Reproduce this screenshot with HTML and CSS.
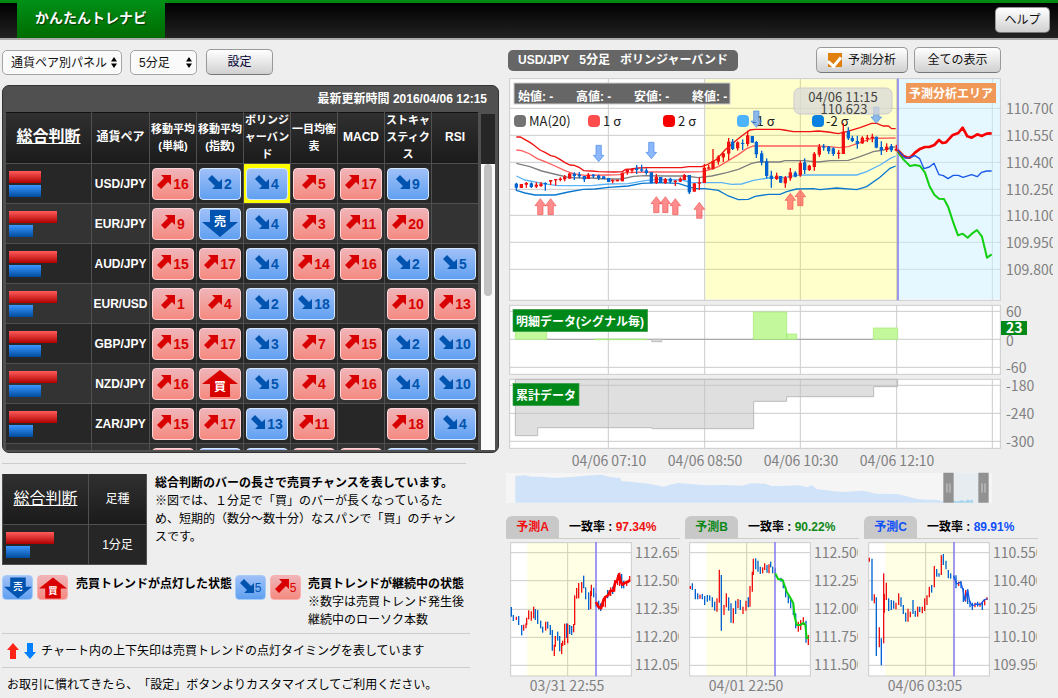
FILE: index.html
```html
<!DOCTYPE html>
<html lang="ja">
<head>
<meta charset="utf-8">
<title>かんたんトレナビ</title>
<link rel="stylesheet" href="styles.css">
</head>
<body>
<header class="top-bar">
  <h1 class="brand">かんたんトレナビ</h1>
  <button class="btn btn-help" type="button">ヘルプ</button>
</header>

<main class="layout">
  <section class="left">
    <div class="controls">
      <label class="select-box select-wide">
        <select aria-label="パネル"><option>通貨ペア別パネル</option></select>
        <svg class="select-arrows" viewBox="0 0 6 11" aria-hidden="true"><path d="M0 4.5L3 0L6 4.5ZM0 6.500L3 11L6 6.500Z"/></svg>
      </label>
      <label class="select-box select-narrow">
        <select aria-label="足種"><option>5分足</option></select>
        <svg class="select-arrows" viewBox="0 0 6 11" aria-hidden="true"><path d="M0 4.5L3 0L6 4.5ZM0 6.500L3 11L6 6.500Z"/></svg>
      </label>
      <button class="btn btn-settings" type="button">設定</button>
    </div>

    <div class="panel">
      <p class="updated">最新更新時間 2016/04/06 12:15</p>
      <div class="panel-body">
        <div class="table-clip">
          <table class="signals">
            <colgroup><col class="col-total"><col class="col-pair"><col span="7"></colgroup>
            <thead>
              <tr>
                <th class="th-total"><a href="#total">総合判断</a></th>
                <th class="th-pair">通貨ペア</th>
                <th>移動平均<br>(単純)</th>
                <th>移動平均<br>(指数)</th>
                <th>ボリンジ<br>ャーバン<br>ド</th>
                <th>一目均衡<br>表</th>
                <th class="th-pair">MACD</th>
                <th>ストキャ<br>スティク<br>ス</th>
                <th class="th-pair">RSI</th>
              </tr>
            </thead>
            <tbody id="signal-rows"></tbody>
          </table>
        </div>
        <div class="scroll">
          <div class="scroll-head"></div>
          <div class="scroll-track"><div class="scroll-thumb"></div></div>
        </div>
      </div>
    </div>

    <div class="guide" id="total">
      <table class="sample">
        <tr><th class="sample-total"><a href="#total">総合判断</a></th><th>足種</th></tr>
        <tr><td class="sample-bars"><div class="bar bar-buy bar-l"></div><div class="bar bar-sell bar-s"></div></td><td>1分足</td></tr>
      </table>
      <p class="guide-text"><strong>総合判断のバーの長さで売買チャンスを表しています。</strong><br>※図では、１分足で「買」のバーが長くなっているた<br>め、短期的（数分～数十分）なスパンで「買」のチャン<br>スです。</p>
    </div>

    <div class="legend">
      <span class="signal signal-small down"><svg class="big" viewBox="0 0 36 27"><path d="M8 0H28V12H36L18 27L0 12H8Z"/><text x="18" y="16">売</text></svg></span>
      <span class="signal signal-small up"><svg class="big" viewBox="0 0 36 27"><path d="M18 0L36 14H28V27H8V14H0Z"/><text x="18" y="21">買</text></svg></span>
      <strong class="legend-lit">売買トレンドが点灯した状態</strong>
      <span class="signal signal-small down"><svg class="arrow" viewBox="0 0 14 14"><path d="M4 14H14V4L11 7L4 0L0 4L7 11Z"/></svg>5</span>
      <span class="signal signal-small up"><svg class="arrow" viewBox="0 0 14 14"><path d="M4 0H14V10L11 7L4 14L0 10L7 3Z"/></svg>5</span>
      <p class="legend-cont"><strong>売買トレンドが継続中の状態</strong><br>※数字は売買トレンド発生後<br>継続中のローソク本数</p>
    </div>

    <p class="note">
      <svg class="note-arrows" viewBox="0 0 30 16" aria-hidden="true"><path class="fill-red" d="M6 0L12 7H9V16H3V7H0Z"/><path class="fill-blue" d="M20 0H26V9H29L23 16L17 9H20Z"/></svg>
      チャート内の上下矢印は売買トレンドの点灯タイミングを表しています
    </p>
    <p class="note note-last">お取引に慣れてきたら、「設定」ボタンよりカスタマイズしてご利用ください。</p>
  </section>

  <section class="right">
    <div class="chart-bar">
      <h2 class="chart-title"><span>USD/JPY</span><span>5分足</span><span>ボリンジャーバンド</span></h2>
      <label class="btn btn-check"><input type="checkbox" checked>予測分析</label>
      <button class="btn btn-all" type="button">全ての表示</button>
    </div>

    <svg class="chart" viewBox="505 76 553 227" role="img" aria-label="USD/JPY 5分足チャート">
      <defs>
        <clipPath id="axis-clip"><rect x="1002" y="76" width="51" height="227"/></clipPath>
      </defs>
      <g transform="translate(505 40) scale(.33333)">
        <rect class="plot" x="14" y="116" width="1472" height="665"/>
        <path class="grid" d="M14 205H1486M14 286H1486M14 367H1486M14 448H1486M14 526H1486M14 607H1486M14 688H1486M310 116V781M599 116V781M886 116V781M1175 116V781M1462 116V781"/>
        <rect class="zone-yellow" x="601" y="118" width="576" height="660"/>
        <rect class="zone-blue" x="1181" y="118" width="303" height="660"/>
      </g>
      <g class="legend-dots">
        <rect x="514" y="115" width="12" height="12" rx="4" fill="#737373"/>
        <rect x="588" y="115" width="12" height="12" rx="4" fill="#ff4d4d"/>
        <rect x="663" y="115" width="12" height="12" rx="4" fill="#f90000"/>
        <rect x="737" y="115" width="12" height="12" rx="4" fill="#4db3ff"/>
        <rect x="812" y="115" width="12" height="12" rx="4" fill="#0a80e0"/>
      </g>
      <g class="legend-names">
        <text x="529" y="126">MA(20)</text><text x="603" y="126">1 σ</text><text x="678" y="126">2 σ</text><text x="752" y="126">-1 σ</text><text x="826" y="126">-2 σ</text>
      </g>
      <g transform="translate(505 40) scale(.33333)">
        <g class="bands">
          <path stroke="#0a78d0" d="M34 451L60 459L90 465H150L190 456L235 448L270 447L310 442L370 438L410 430L460 428L520 430L550 440L570 446H600L640 451L670 468L700 479L730 478L750 469L790 463L825 463L845 455L875 447L925 446L945 449L995 444L1055 449L1085 440L1125 412L1155 385L1172 378"/>
          <path stroke="#5cb3f5" d="M34 408L60 420L100 428L135 434L160 437H260L310 432L370 431L420 422L460 418L530 420L560 428H650L680 433L710 432L745 421L790 414L840 412L875 406L905 405H1055L1085 395L1125 375L1155 356L1172 348"/>
          <path stroke="#808080" d="M34 370L75 380L110 393L160 405L190 412L225 414H260L300 417H350L385 409L420 407L480 408H540L580 413L620 408L665 398L700 388L740 370L760 366H825L840 362H895L940 366L975 362L1030 361L1065 350L1105 335L1135 330L1172 320"/>
          <path stroke="#ff5c5c" d="M34 330L50 332L75 342L95 355L120 365L150 378L180 392L205 401L240 406L310 405L345 404L360 398L430 396H540L590 395L610 390L640 380L670 362L700 344L725 326L745 318H940L970 320L1003 323L1030 320L1065 308L1100 295L1172 294"/>
          <path stroke="#f01010" d="M34 291H46L60 299L76 308L90 318L105 330L120 337L137 347L150 350L165 358L180 368L195 375L208 376L222 382L236 392L260 393L280 395L330 396L352 395L362 388L380 387L400 384L430 383H530L550 380H590L605 375L635 358L660 330L685 308L710 288L735 270L750 268H825L837 270L865 275H915L940 273L970 276L1000 281L1025 275L1065 263L1100 250H1115L1135 258H1150L1160 266H1172"/>
        </g>
        <g id="main-candles"></g>
        <rect class="now-line" x="1176" y="116" width="6" height="665"/>
        <path class="f-green" d="M1178 335L1195 358L1215 378L1230 375L1245 378L1260 398L1273 437L1288 464L1302 476L1317 477L1330 502L1345 548L1359 586L1373 581L1388 593L1402 580L1416 570L1431 590L1446 653L1460 643"/>
        <path class="f-red" d="M1178 330L1195 348L1205 352L1215 353L1230 338L1243 328L1260 321H1273L1288 315L1302 300L1312 309L1323 307L1342 286L1360 279L1373 263L1387 289L1400 293L1417 283L1430 288L1445 281L1460 280"/>
        <path class="f-blue" d="M1178 330L1200 354L1215 353L1230 347L1244 356L1257 386L1273 381L1287 370L1302 404L1315 407L1329 416L1345 406L1360 406L1374 412L1400 404L1417 410L1430 397L1445 393H1460"/>
        <g id="main-arrows"></g>
      </g>
      <rect class="ohlc-box" x="514" y="83" width="216" height="21"/>
      <g class="ohlc"><text x="518" y="101">始値: -</text><text x="576" y="101">高値: -</text><text x="634" y="101">安値: -</text><text x="692" y="101">終値: -</text></g>
      <rect class="tip" x="794" y="88" width="98" height="26" rx="6"/>
      <g class="tip-text"><text x="843" y="102">04/06 11:15</text><text x="844" y="114">110.623</text></g>
      <rect class="area-box" x="906" y="83" width="90" height="20"/>
      <text class="area-text" x="951" y="98">予測分析エリア</text>
      <g class="axis" clip-path="url(#axis-clip)">
        <text x="1006" y="114">110.700</text><text x="1006" y="141">110.550</text><text x="1006" y="168">110.400</text><text x="1006" y="195">110.250</text><text x="1006" y="221">110.100</text><text x="1006" y="248">109.950</text><text x="1006" y="275">109.800</text>
      </g>
    </svg>

    <svg class="chart" viewBox="505 303 553 73" role="img" aria-label="明細データ">
      <g transform="translate(505 300) scale(.33333)">
        <rect class="plot" x="14" y="16" width="1472" height="207"/>
        <path class="grid" d="M14 34H1486M14 118H1486M14 202H1486M310 16V223M599 16V223M886 16V223M1175 16V223M1462 16V223"/>
        <path stroke="#a0a0a0" stroke-width="3" d="M125 118H1105"/>
        <path class="gain" d="M31 88H125V118H31ZM745 36H845V118H745ZM845 102H875V118H845ZM1105 84H1178V118H1105ZM268 117H426V119H268Z"/>
        <rect class="loss" x="441" y="118" width="29" height="7"/>
        <rect class="tag" x="24" y="28" width="404" height="67"/>
      </g>
      <g class="axis"><text x="1006" y="317">60</text><text x="1006" y="346">0</text><text x="1006" y="373">-60</text></g>
      <rect class="tag-flat" x="1001" y="321" width="26" height="14"/>
      <text class="tag-text" x="516" y="326">明細データ(シグナル毎)</text>
      <text class="tag-num" x="1006" y="333">23</text>
    </svg>

    <svg class="chart" viewBox="505 376 553 95" role="img" aria-label="累計データ">
      <g transform="translate(505 300) scale(.33333)">
        <rect class="plot" x="14" y="238" width="1472" height="207"/>
        <path class="grid" d="M14 256H1486M14 340H1486M14 424H1486M310 238V445M599 238V445M886 238V445M1175 238V445M1462 238V445"/>
        <path class="loss" d="M31 238V407H98V383H441V386H746V304H845V290H1106V260H1178V238Z"/>
        <rect class="tag" x="24" y="250" width="198" height="67"/>
      </g>
      <text class="tag-text" x="516" y="400">累計データ</text>
      <g class="axis"><text x="1006" y="391">-180</text><text x="1006" y="419">-240</text><text x="1006" y="447">-300</text></g>
      <g class="axis axis-mid"><text x="609" y="466">04/06 07:10</text><text x="705" y="466">04/06 08:50</text><text x="801" y="466">04/06 10:30</text><text x="897" y="466">04/06 12:10</text></g>
    </svg>

    <svg class="chart" viewBox="505 471 553 37" role="img" aria-label="表示範囲">
      <rect x="506" y="473" width="486" height="30" fill="#f5f5f5"/>
      <rect x="953" y="473" width="25" height="30" fill="#e6ecef"/>
      <g transform="translate(505 300) scale(.33333)">
        <path fill="#d0e3f8" d="M31 608V528L60 526L80 530H110L150 534L200 531L240 527L290 524L310 530L345 534L350 543L390 547L430 551L455 556L475 560L500 553L520 549L600 556L660 555L710 557L740 550L780 551L800 558L825 558L885 556L905 562L922 556L935 567L975 572L1015 576L1075 572L1115 581L1175 582L1205 589L1235 597L1265 599L1295 599L1315 604V608Z"/>
        <path fill="#a8d4ee" d="M1346 608V602L1360 604L1372 600L1380 605L1388 598L1395 602L1404 598V608Z"/>
        <path fill="#919191" d="M1315 518H1346V608H1315ZM1420 518H1451V608H1420Z"/>
        <path stroke="#d0d0d0" stroke-width="3" d="M1326 550V578M1335 550V578M1431 550V578M1440 550V578"/>
      </g>
    </svg>

    <div class="minis">
      <article class="mini mini-a">
        <div class="mini-head"><button class="tab" type="button">予測A</button><p>一致率 : <b>97.34%</b></p></div>
        <svg class="chart" viewBox="0 0 174 157" id="mini-a" role="img" aria-label="予測A"></svg>
      </article>
      <article class="mini mini-b">
        <div class="mini-head"><button class="tab" type="button">予測B</button><p>一致率 : <b>90.22%</b></p></div>
        <svg class="chart" viewBox="0 0 174 157" id="mini-b" role="img" aria-label="予測B"></svg>
      </article>
      <article class="mini mini-c">
        <div class="mini-head"><button class="tab" type="button">予測C</button><p>一致率 : <b>89.91%</b></p></div>
        <svg class="chart" viewBox="0 0 174 157" id="mini-c" role="img" aria-label="予測C"></svg>
      </article>
    </div>
  </section>
</main>
<script src="app.js"></script>
</body>
</html>
```

FILE: styles.css
```css
* { box-sizing: border-box; }

body {
  margin: 0;
  background: #eee;
  color: #000;
  font: 12px/18px "Liberation Sans", "Noto Sans CJK JP", sans-serif;
  text-spacing-trim: space-all;
}

p, h1, h2 { margin: 0; }
button, select, input { font: inherit; }
svg { display: block; }

/* Header */
.top-bar {
  display: flex;
  justify-content: space-between;
  height: 40px;
  padding: 0 8px 0 17px;
  border-bottom: 2px solid #aaa;
  background: linear-gradient(#008a14 3px, #000 3px, #222);
}
.brand {
  padding: 0 18px;
  background: linear-gradient(#009018, #006c00);
  color: #fff;
  font-size: 14px;
  line-height: 37px;
  text-shadow: 1px 1px 1px #003800;
}

.btn {
  height: 26px;
  padding: 0;
  border: 1px solid #999;
  border-bottom-color: #777;
  border-radius: 5px;
  background: linear-gradient(#fff, #d0d0d0);
  color: #111;
  font-size: 12px;
  line-height: 24px;
  text-align: center;
}
.btn-help { width: 55px; margin-top: 7px; }
.btn-settings { width: 67px; margin-left: 1px; color: #003; }

.layout {
  display: grid;
  grid-template-columns: 505px minmax(0, 1fr);
}

/* Left column */
.left { padding: 9px 6px 0 2px; }

.controls { display: flex; gap: 8px; }
.select-box { position: relative; display: block; }
.select-box select {
  width: 100%;
  height: 25px;
  margin-top: 1px;
  padding: 0 8px;
  border: 1px solid #a4a4a4;
  border-radius: 5px;
  background: #fafafa;
  color: #111;
  appearance: none;
}
.select-wide { width: 120px; }
.select-narrow { width: 67px; }
.select-arrows { position: absolute; top: 8px; right: 5px; width: 6px; height: 11px; }

.panel {
  margin-top: 10px;
  padding: 0 3px 2px;
  border: 1px solid #333;
  border-radius: 7px;
  background: #505050;
}
.updated {
  padding: 1px 8px 0 0;
  color: #fff;
  font-weight: bold;
  line-height: 25px;
  text-align: right;
}
.panel-body { display: flex; gap: 2px; height: 338px; }
.table-clip { flex: 1; overflow: hidden; }

.signals { width: 100%; border-spacing: 0; table-layout: fixed; color: #fff; font-weight: bold; }
.signals col { width: 47px; }
.signals .col-total { width: 86px; }
.signals .col-pair { width: 58px; }
.signals th {
  height: 52px;
  padding: 0;
  border-right: 1px solid #505050;
  border-bottom: 1px solid #505050;
  background: linear-gradient(#111 1px, #303030 1px, #1b1b1b);
  font-size: 11px;
  line-height: 17px;
  white-space: nowrap;
}
.signals .th-pair { font-size: 12px; }
.th-total a, .sample-total a { color: #fff; font-size: 16px; }
.signals td {
  height: 40px;
  padding: 0;
  border-right: 1px solid #505050;
  border-bottom: 1px solid #505050;
  background: #272727;
  text-align: center;
}
.signals tr:nth-child(even) td { background: #333; }
.signals td.picked { background: #ff0; }
.signals td.total { padding-left: 3px; text-align: left; }

.bar { height: 12px; }
.bar + .bar { margin-top: 2px; }
.bar-buy { background: linear-gradient(#ff5c5c, #b00000); }
.bar-sell { background: linear-gradient(#3c96ff, #004c9c); }
.bar-l { width: 48px; }
.bar-m { width: 32px; }
.bar-s { width: 24px; }

.signal {
  display: flex;
  align-items: center;
  justify-content: center;
  gap: 2px;
  width: 42px;
  height: 32px;
  margin: 0 auto;
  padding: 0;
  border: 1px solid;
  border-radius: 4px;
  font-size: 14px;
  font-weight: bold;
}
.up { border-color: #ffd4d8; background: linear-gradient(#f0b4b8, #f48a80); color: #d80000; }
.down { border-color: #d4e8ff; background: linear-gradient(#a0c0f8, #60a0f0); color: #0054b0; }
.arrow { flex: none; width: 14px; height: 14px; margin-bottom: 3px; }
.signal path { fill: currentColor; }
.big { width: 36px; height: 27px; }
.big text { fill: #fff; font-size: 12px; font-weight: bold; text-anchor: middle; }

.scroll { display: flex; flex-direction: column; width: 14px; }
.scroll-head { height: 52px; border-top: 2px solid #505050; background: #262626; }
.scroll-track { flex: 1; padding: 0 3px; background: #fafafa; }
.scroll-thumb { width: 8px; height: 132px; border-radius: 4px; background: #c1c1c1; }

/* Guide below the table */
.guide {
  display: flex;
  gap: 8px;
  width: 464px;
  margin-top: 10px;
  padding-top: 10px;
  border-top: 1px solid #ccc;
}
.sample { width: 145px; border-spacing: 0; border: 1px solid #505050; border-width: 0 0 1px 1px; color: #fff; }
.sample th, .sample td {
  padding: 0;
  border-right: 1px solid #505050;
  background: #262626;
  font-weight: normal;
  text-align: center;
}
.sample th { height: 51px; border-bottom: 1px solid #505050; background: linear-gradient(#303030, #1b1b1b); }
.sample td { height: 39px; }
.sample .sample-total { width: 86px; }
.sample .sample-bars { padding-left: 3px; }

.legend { display: flex; width: 468px; padding: 10px 0 4px; border-bottom: 1px solid #ccc; }
.signal-small { width: 31px; height: 25px; margin: 0 4px 0 0; gap: 1px; font-size: 12px; font-weight: normal; }
.signal-small.up { border-color: #f8b0b0; }
.signal-small.down { border-color: #a8ccf8; }
.signal-small .big { width: 28px; height: 22px; }
.legend-lit { margin: 0 3px 0 4px; white-space: nowrap; }
.legend-cont { margin-left: 3px; white-space: nowrap; }

.note {
  display: flex;
  align-items: center;
  gap: 4px;
  width: 468px;
  height: 34px;
  padding-left: 5px;
  border-bottom: 1px solid #ccc;
  white-space: nowrap;
}
.note-arrows { width: 30px; height: 16px; }
.fill-red { fill: #ff2418; }
.fill-blue { fill: #0080ff; }
.note-last { border: 0; height: 28px; padding-top: 6px; }

/* Right column */
.right { padding-top: 7px; }
.chart-bar { display: flex; gap: 6px; align-items: center; height: 29px; padding: 0 57px 3px 3px; }
.chart-title {
  display: flex;
  gap: 10px;
  margin-right: auto;
  padding: 0 10px;
  border-radius: 5px;
  background: #666;
  color: #fff;
  font-size: 12px;
  line-height: 21px;
}
.btn-check { display: flex; align-items: center; justify-content: center; gap: 6px; width: 92px; }
.btn-check input {
  appearance: none;
  width: 14px;
  height: 14px;
  margin: 0;
  background: #e08010;
}
.btn-check input::after {
  content: "";
  display: block;
  width: 6px;
  height: 10px;
  margin: 1px auto 0;
  border: solid #fff;
  border-width: 0 3px 3px 0;
  transform: rotate(40deg);
}
.btn-all { width: 87px; }

.chart { width: 100%; height: auto; }
.chart text { font-family: "Noto Sans CJK JP", sans-serif; }
.plot { fill: #fff; stroke: #ccc; stroke-width: 3; }
.grid { fill: none; stroke: #ccc; stroke-width: 3; }
.zone-yellow { fill: #ff0; opacity: .2; }
.zone-pale { fill: #ff0; opacity: .1; }
.zone-blue { fill: #ccefff; opacity: .5; }
.now-line { fill: #8078f0; opacity: .75; }
.bands path { fill: none; stroke-width: 4; }
.rise { stroke: #f01010; }
.fall { stroke: #0064d0; }
.wick { stroke-width: 4; }
.body { stroke-width: 10; }
.f-red, .f-green, .f-blue { fill: none; stroke-linejoin: round; }
.f-red { stroke: #f80000; stroke-width: 8; }
.f-green { stroke: #10d010; stroke-width: 6; }
.f-blue { stroke: #1858e8; stroke-width: 4; }
.mark-up { fill: #ff4040; fill-opacity: .6; stroke: #f05858; stroke-width: 2; }
.mark-down { fill: #4088f8; fill-opacity: .6; stroke: #4888e8; stroke-width: 2; }
.gain { fill: #c4f89c; stroke: #a0e870; stroke-width: 2; }
.loss { fill: #c0c0c0; fill-opacity: .5; stroke: #bbb; stroke-width: 3; }
.tag { fill: #008818; stroke: #40a050; stroke-width: 2; }
.tag-flat { fill: #008818; }
.axis text { fill: #808080; font-size: 14px; }
.axis-mid text { text-anchor: middle; }
.legend-names text { fill: #222; font-size: 13px; }
.ohlc-box { fill: #666; stroke: #ccc; }
.ohlc text, .chart .tag-text { fill: #fff; font: bold 12px "Liberation Sans", "Noto Sans CJK JP", sans-serif; }
.tip { fill: #d8d8d8; fill-opacity: .75; stroke: #ccc; }
.tip-text text { fill: #444; font-size: 13px; text-anchor: middle; }
.area-box { fill: #f09858; }
.area-text { fill: #fff; font-size: 12px; font-weight: bold; text-anchor: middle; }
.tag-num { fill: #fff; font-size: 14px; font-weight: bold; }

.minis { display: grid; grid-template-columns: repeat(3, minmax(0, 1fr)); gap: 5px; padding: 8px 20px 0 1px; }
.mini-head { display: flex; gap: 10px; margin-bottom: 1px; border-bottom: 1px solid #ccc; font-weight: bold; white-space: nowrap; }
.mini-head p { line-height: 22px; }
.tab {
  width: 53px;
  height: 22px;
  padding: 0;
  border: 0;
  border-radius: 6px 6px 0 0;
  background: #c8c8c8;
  font-weight: bold;
}
.mini-a .tab, .mini-a b { color: #f01010; }
.mini-b .tab, .mini-b b { color: #108818; }
.mini-c .tab, .mini-c b { color: #1050f8; }
```

FILE: app.js
```js
// Signal table -------------------------------------------------------------
// u = rising, d = falling, B = buy just lit, S = sell just lit
const rows = [
  ["USD/JPY", "m", "m", ["u16", "d2", "d4", "u5", "u17", "d9", ""]],
  ["EUR/JPY", "l", "s", ["u9", "S", "d4", "u3", "u11", "u20", ""]],
  ["AUD/JPY", "l", "m", ["u15", "u17", "d4", "u14", "u16", "d2", "d5"]],
  ["EUR/USD", "l", "s", ["u1", "u4", "d2", "d18", "", "u10", "u13"]],
  ["GBP/JPY", "l", "m", ["u15", "u17", "d3", "u7", "u15", "d2", "d10"]],
  ["NZD/JPY", "l", "m", ["u16", "B", "d5", "u4", "u16", "d4", "d10"]],
  ["ZAR/JPY", "l", "s", ["u15", "u17", "d13", "u11", "", "u18", "d4"]],
  ["", "l", "s", ["u", "S", "d", "u", "u", "d", "d"]]
];
const icon = {
  u: "M4 0H14V10L11 7L4 14L0 10L7 3Z",
  d: "M4 14H14V4L11 7L4 0L0 4L7 11Z",
  S: "M8 0H28V12H36L18 27L0 12H8Z",
  B: "M18 0L36 14H28V27H8V14H0Z"
};

function signal(code) {
  if (!code) return "";
  const kind = code[0];
  if (kind === "S" || kind === "B") {
    const sell = kind === "S";
    return `<button type="button" class="signal ${sell ? "down" : "up"}"><svg class="big" viewBox="0 0 36 27"><path d="${icon[kind]}"/><text x="18" y="${sell ? 16 : 21}">${sell ? "売" : "買"}</text></svg></button>`;
  }
  return `<button type="button" class="signal ${kind === "u" ? "up" : "down"}"><svg class="arrow" viewBox="0 0 14 14"><path d="${icon[kind]}"/></svg>${code.slice(1)}</button>`;
}

document.getElementById("signal-rows").innerHTML = rows.map(([pair, buy, sell, cells], r) =>
  `<tr><td class="total"><div class="bar bar-buy bar-${buy}"></div><div class="bar bar-sell bar-${sell}"></div></td><td>${pair}</td>` +
  cells.map((c, i) => `<td${r === 0 && i === 2 ? ' class="picked"' : ""}>${signal(c)}</td>`).join("") + "</tr>"
).join("");

// Main chart candles: x colour top bottom [high low] -------------------------
const candles = `34b431,443,428,452 49r432,444 64r429,434,426,443 79b430,441,427,444 94r434,440,427,444 108r431,438,426,441
121b429,433,427,452 137r420,425,420,435 152r417,421,417,437 166r416,420,412,424 179r410,418,405,424 194r400,416 208b401,408,397,420 223b404,409,396,414
238b408,418,408,426 250r404,417,399,417 265b404,409,402,414 281b407,414,404,420 296b409,417 311b414,426 323r420,424,418,430 337r419,424
352r398,424 367r390,396,388,404 381r387,392,384,400 395b385,390,375,402 410b388,392,374,396 424b391,399,385,404 439b397,430 454r410,429,402,432
467b411,429 481r417,429,414,432 496b416,425,413,430 511r422,426,420,438 526r416,425,412,426 538r405,420,402,420 553b405,457,405,462 568r430,455
583r427,431,412,450 598r383,429,372,429 611r382,386,374,388 624r363,387,327,389 640r350,365,346,374 655r340,352,338,366 671r305,341,294,360
683b305,327,297,330 698r307,325,304,332 713b309,312,298,330 728r286,312,272,319 742b288,308 754b306,343,303,354 770b340,367,332,376
785b364,408,355,415 799b407,417,392,443 815r407,417,398,420 827b408,428 841r412,430,408,443 856r397,415,384,422 871b398,410,394,412
886r369,406,362,410 899b367,390,355,402 913r377,390,374,393 928r341,381,336,392 943r321,344,312,350 956b319,323,312,332 971b320,334,318,342
985b325,342,322,348 1001r338,342,330,356 1015r275,342,250,342 1030b273,295,262,300 1042b294,303,287,306 1057b303,312,287,326 1072r293,310,289,312
1087r293,297,285,306 1102r290,295,281,307 1114b290,323,290,325 1129b321,330,304,345 1145r320,330,310,336 1159b318,331,312,336 1174r326,332,314,334`;

document.getElementById("main-candles").innerHTML = candles.split(/\s+/).map(item => {
  const [, x, colour, rest] = item.match(/^(\d+)([rb])(.*)$/);
  const [top, bottom, high = top, low = bottom] = rest.split(",");
  const tone = colour === "r" ? "rise" : "fall";
  return `<path class="${tone} wick" d="M${x} ${high}V${low}"/><path class="${tone} body" d="M${x} ${top}V${bottom}"/>`;
}).join("");

const downs = [[281, 316], [439, 307], [754, 213], [1114, 201]];
const ups = [[106, 476], [137, 476], [454, 470], [481, 470], [511, 476], [583, 487], [856, 460], [886, 449]];
document.getElementById("main-arrows").innerHTML =
  downs.map(([x, y]) => `<path class="mark-down" d="M${x - 8} ${y}h16v30h8l-16 19l-16 -19h8z"/>`).join("") +
  ups.map(([x, y]) => `<path class="mark-up" d="M${x} ${y}l16 21h-8v27h-16v-27h-8z"/>`).join("");

// Forecast charts: x colour high low -----------------------------------------
const minis = [
  {
    id: "mini-a", shift: 0, date: "03/31 22:55", line: "f-red",
    labels: ["112.650", "112.500", "112.350", "112.200", "112.050"],
    path: "M288 276L295 290L303 295L310 272L315 262L325 255L330 243L340 242L345 220L352 210L357 193L362 215L368 224L375 218L385 215L388 210",
    bars: `34b291,320 40b315,333 49r320,330 56b318,345 65b345,376 71r344,362 78r340,355 80r323,345 86r301,328 94r304,332 101r290,325 106b297,330 113b300,342
122b332,355 128b350,368 137r335,362 143b335,356 151b345,375 157b360,422 163r404,438 166r378,410 173b365,392 179b378,424 185r399,432 188r392,408 194r341,405
200b340,384 203r341,400 209b345,372 215b348,375 221r342,367 224r256,345 230r234,266 236r219,265 245r216,248 251b197,235 257b232,268 266b247,300 272r243,297 274r224,258
281b233,262 288b250,290 296b272,298 302b280,303 310r265,290 316r260,292 323b240,265 332r232,258 338b230,252 344r210,245 353r195,225 359r188,228 365b192,235 371b213,235 380r214,228 389r198,216`
  },
  {
    id: "mini-b", shift: 537, date: "04/01 22:50", line: "f-green",
    labels: ["112.500", "112.250", "112.000", "111.750", "111.500"],
    path: "M826 190L834 207L848 210L860 245L872 265L880 280L884 320L890 345L902 345L910 338L916 345L920 385L926 382",
    bars: `571r228,237 577b220,240 586b237,268 593b250,268 600r254,266 607b252,268 614b258,285 622b255,275 629b256,272 637b262,292 644b275,302 651r265,305 658r179,278
664b195,362 672r285,315 679r250,292 686b262,302 693b280,338 700r295,340 707b272,312 714r267,295 721b270,300 729r290,312 738r272,302 745b262,292 750r228,290
757r185,245 760r146,195 767b145,178 774b152,185 781b170,192 788r172,190 794r160,180 801b165,188 807r163,190 812b155,172 818b170,190 826b175,200 843b203,215
850b210,235 857b232,262 865b255,280 872b268,295 880b280,315 887b310,355 895r335,365 902r330,360 910r322,345 918b332,398 925r375,405`
  },
  {
    id: "mini-c", shift: 237, date: "04/06 03:05", line: "f-blue",
    labels: ["110.550", "110.400", "110.250", "110.100", "109.950"],
    path: "M524 198L533 222L545 216L552 240L558 272L566 240L572 275L580 288L590 282L605 284L615 270L625 266",
    bars: `271r143,155 279b146,272 286r253,280 292b262,438 301r352,412 307b385,466 314r190,400 316r252,308 322r218,270 329b265,303 337b270,300 344b272,296 351r278,298
359r250,285 366b262,290 373b285,312 380b308,335 387r296,335 394r305,322 402b270,312 409b302,320 416r290,320 422b290,306 430r290,310 437r265,303 444r256,285 451r230,262
458b225,248 466r168,232 473b177,200 480b190,200 487r136,195 493b132,165 501b152,178 508b180,205 515b190,206 524b195,208 531b196,235 539r215,228 546b214,235 553b235,276
560r240,275 566b238,282 573b272,292 580b278,300 588r278,292 596b275,290 603r278,290 610b275,300 617r268,286 624r262,270`
  }
];

for (const m of minis) {
  const bars = m.bars.split(/\s+/).map(item => {
    const [, x, colour, high, low] = item.match(/^(\d+)([rb])(\d+),(\d+)$/);
    return `<path class="wick ${colour === "r" ? "rise" : "fall"}" d="M${x} ${high}V${low}"/>`;
  }).join("");
  document.getElementById(m.id).innerHTML = `
    <defs><clipPath id="${m.id}-clip"><rect x="127" y="0" width="46" height="157"/></clipPath></defs>
    <g transform="translate(-6 -30) scale(.33333)">
      <rect class="plot" x="32" y="98" width="362" height="400"/>
      <path class="grid" d="M32 128H394M32 212H394M32 298H394M32 382H394M32 466H394M203 98V498"/>
      <rect class="zone-pale" x="82" y="99" width="204" height="398"/>
      <g transform="translate(${-m.shift} 0)">${bars}</g>
      <rect class="now-line" x="285" y="96" width="6" height="403"/>
      <g transform="translate(${-m.shift} 0)"><path class="${m.line}" d="${m.path}"/></g>
    </g>
    <g class="axis" clip-path="url(#${m.id}-clip)">${m.labels.map((t, i) => `<text x="129" y="${18 + i * 28}">${t}</text>`).join("")}</g>
    <g class="axis axis-mid"><text x="61" y="151">${m.date}</text></g>`;
}
```
